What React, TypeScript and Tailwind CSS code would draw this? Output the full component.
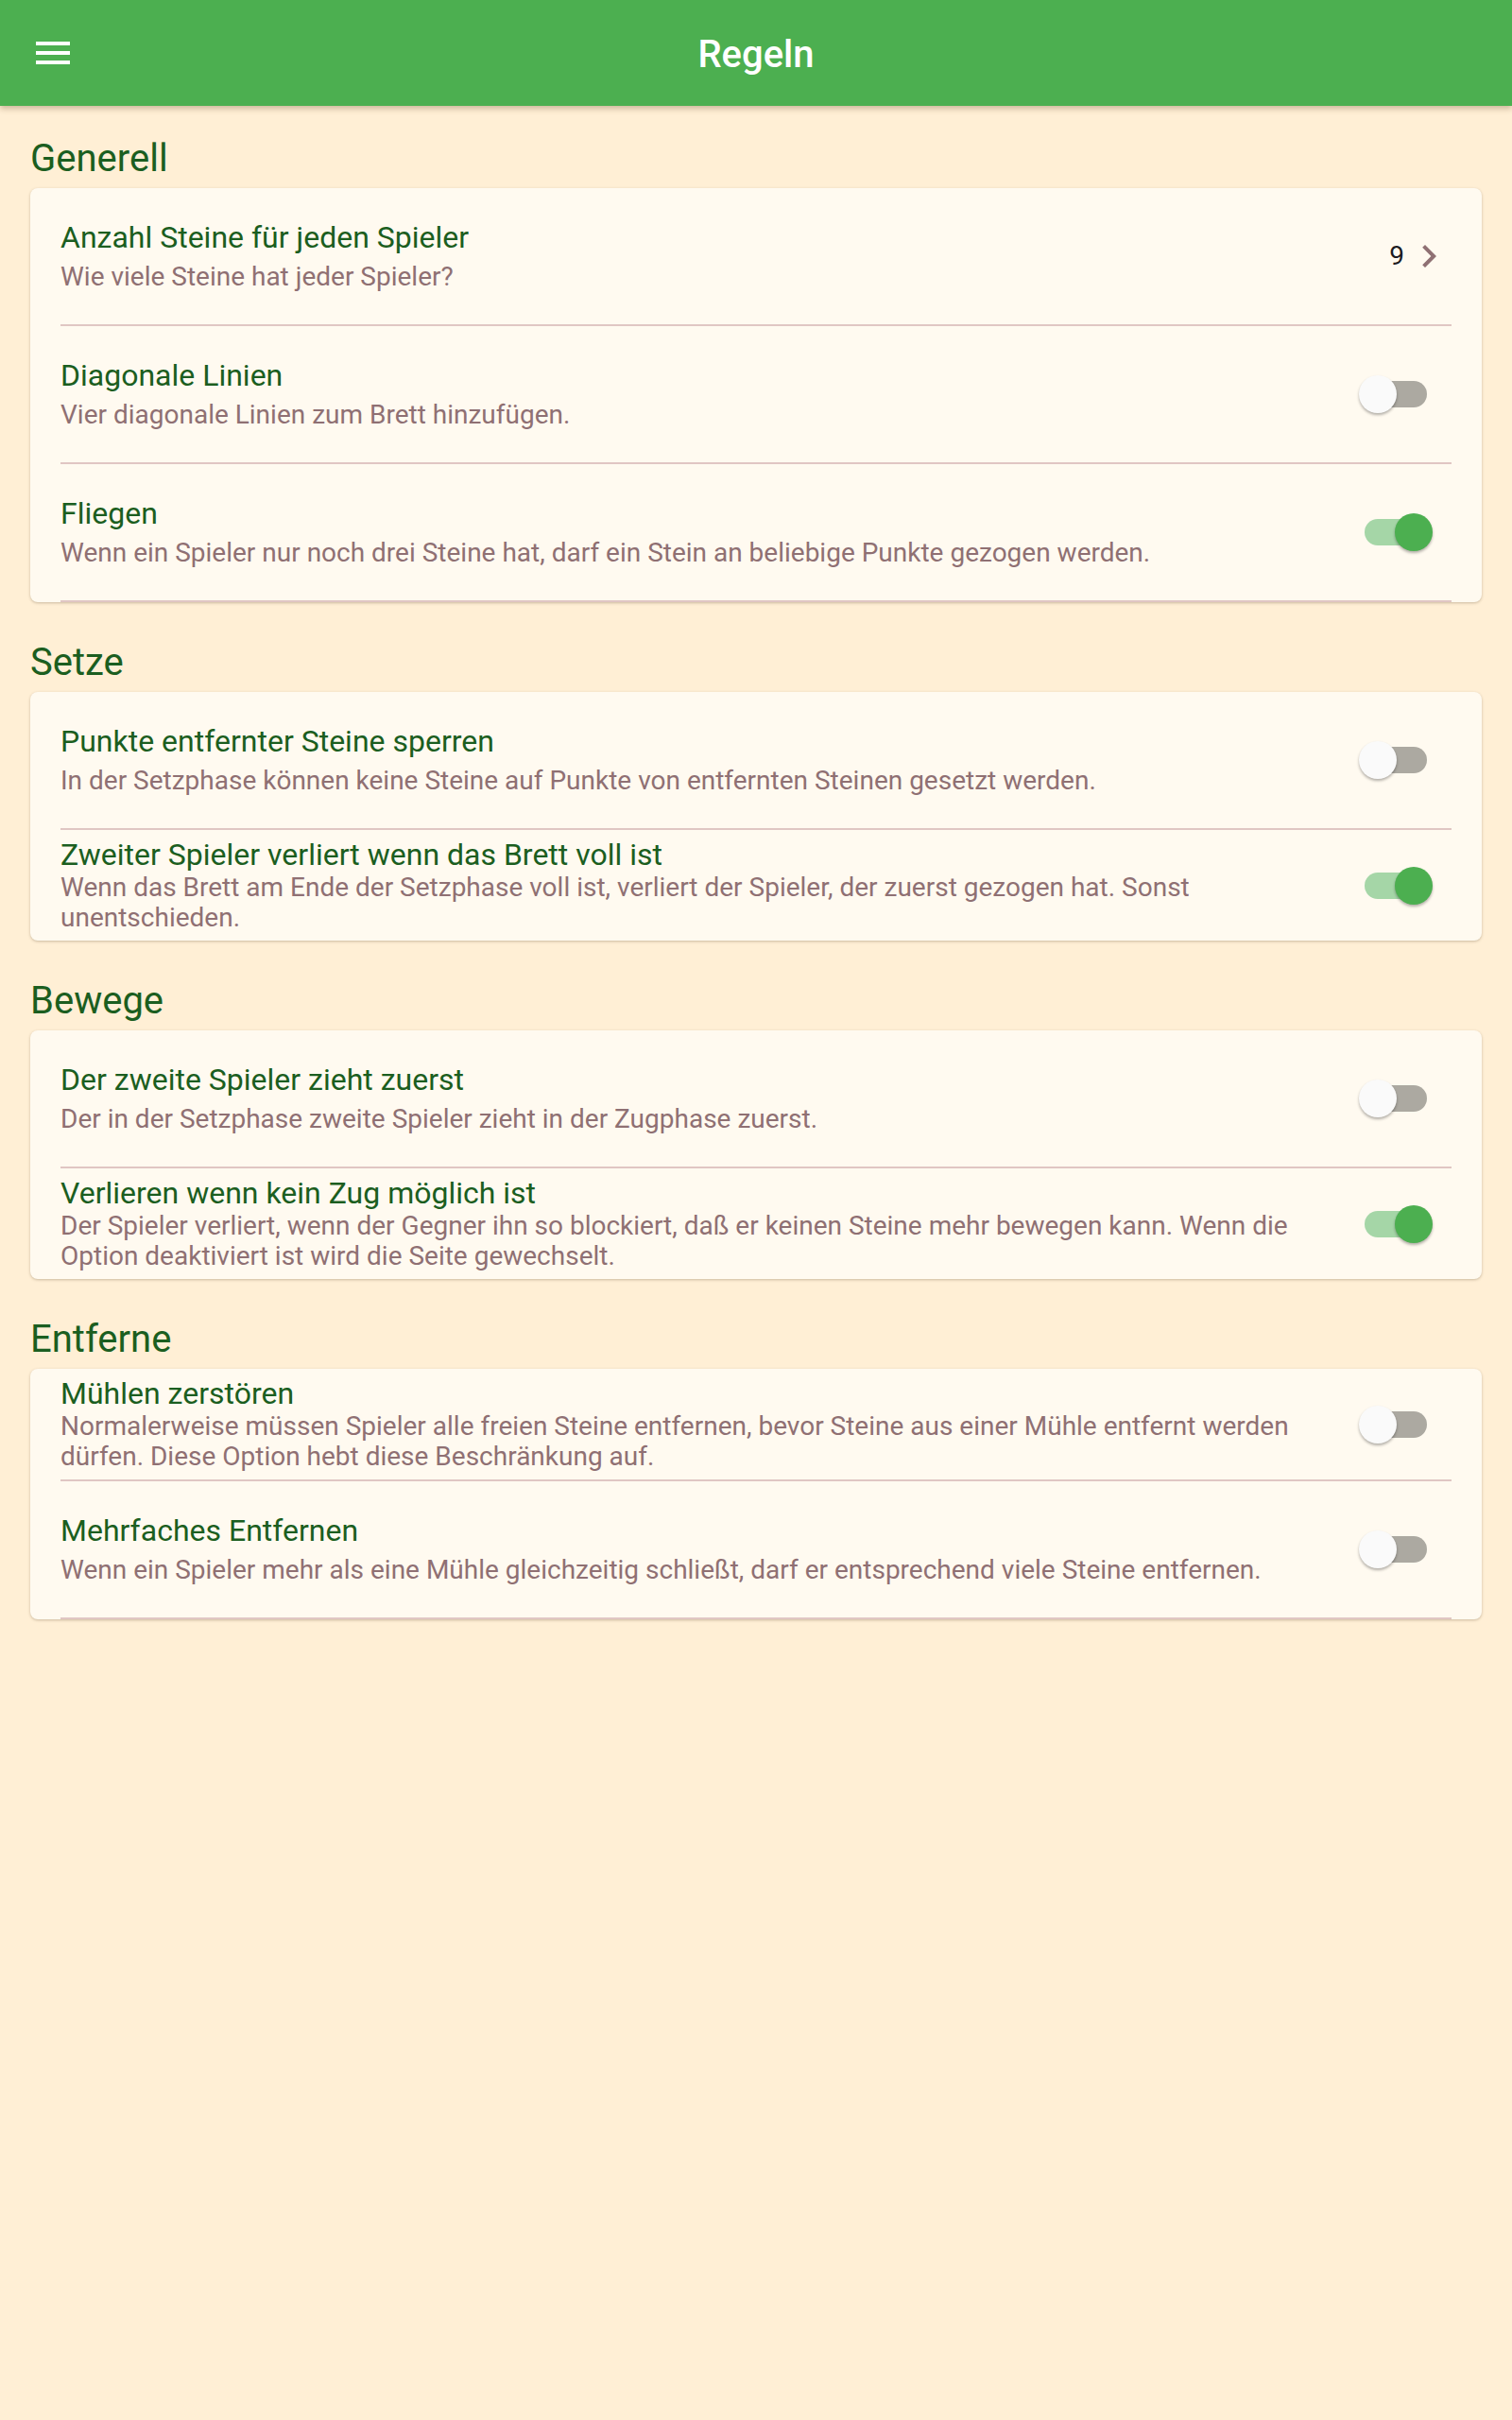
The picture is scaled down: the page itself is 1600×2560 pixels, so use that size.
type Rule = {
  title: string;
  subtitle: string;
  on?: boolean;
  value?: string;
  wrapped?: boolean;
  divider?: boolean;
};

const sections: { name: string; rules: Rule[] }[] = [
  {
    name: 'Generell',
    rules: [
      { title: 'Anzahl Steine für jeden Spieler', subtitle: 'Wie viele Steine hat jeder Spieler?', value: '9', divider: true },
      { title: 'Diagonale Linien', subtitle: 'Vier diagonale Linien zum Brett hinzufügen.', on: false, divider: true },
      { title: 'Fliegen', subtitle: 'Wenn ein Spieler nur noch drei Steine hat, darf ein Stein an beliebige Punkte gezogen werden.', on: true, divider: true },
    ],
  },
  {
    name: 'Setze',
    rules: [
      { title: 'Punkte entfernter Steine sperren', subtitle: 'In der Setzphase können keine Steine auf Punkte von entfernten Steinen gesetzt werden.', on: false, divider: true },
      { title: 'Zweiter Spieler verliert wenn das Brett voll ist', subtitle: 'Wenn das Brett am Ende der Setzphase voll ist, verliert der Spieler, der zuerst gezogen hat. Sonst unentschieden.', on: true, wrapped: true },
    ],
  },
  {
    name: 'Bewege',
    rules: [
      { title: 'Der zweite Spieler zieht zuerst', subtitle: 'Der in der Setzphase zweite Spieler zieht in der Zugphase zuerst.', on: false, divider: true },
      { title: 'Verlieren wenn kein Zug möglich ist', subtitle: 'Der Spieler verliert, wenn der Gegner ihn so blockiert, daß er keinen Steine mehr bewegen kann. Wenn die Option deaktiviert ist wird die Seite gewechselt.', on: true, wrapped: true },
    ],
  },
  {
    name: 'Entferne',
    rules: [
      { title: 'Mühlen zerstören', subtitle: 'Normalerweise müssen Spieler alle freien Steine entfernen, bevor Steine aus einer Mühle entfernt werden dürfen. Diese Option hebt diese Beschränkung auf.', on: false, wrapped: true, divider: true },
      { title: 'Mehrfaches Entfernen', subtitle: 'Wenn ein Spieler mehr als eine Mühle gleichzeitig schließt, darf er entsprechend viele Steine entfernen.', on: false, divider: true },
    ],
  },
];

function Toggle({ on }: { on: boolean }) {
  return (
    <div className="relative w-[118px] h-[48px] shrink-0">
      <div className={`absolute left-[26px] top-[10px] w-[66px] h-[28px] rounded-full ${on ? 'bg-[#a5d6a7]' : 'bg-[#aca9a1]'}`} />
      <div
        className={`absolute top-[4px] w-[40px] h-[40px] rounded-full shadow-[0_2px_3px_rgba(0,0,0,0.3)] ${on ? 'left-[58px] bg-[#4caf50]' : 'left-[20px] bg-[#fafafa]'}`}
      />
    </div>
  );
}

function RuleRow({ rule }: { rule: Rule }) {
  return (
    <>
      <div className={`flex items-center px-8 ${rule.wrapped ? 'h-[117px]' : 'h-[144px]'}`}>
        <div className={`flex-1 min-w-0 ${rule.wrapped ? '' : 'pb-[4px]'}`}>
          <div className={`text-[32px] text-[#1b5e20] ${rule.wrapped ? 'leading-[37px]' : 'leading-[48px]'}`}>{rule.title}</div>
          <div className={`text-[28px] text-[#8f7073] ${rule.wrapped ? 'leading-[32px]' : 'leading-[36px]'}`}>{rule.subtitle}</div>
        </div>
        {rule.value ? (
          <div className="ml-8 flex items-center">
            <span className="text-[28px] text-[#1c1b1f] mr-[2px]">{rule.value}</span>
            <svg viewBox="0 0 24 24" className="w-[48px] h-[48px] fill-[#8f7073]">
              <path d="M10 6 8.59 7.41 13.17 12l-4.58 4.59L10 18l6-6z" />
            </svg>
          </div>
        ) : (
          <div className="ml-8">
            <Toggle on={!!rule.on} />
          </div>
        )}
      </div>
      {rule.divider && <div className="mx-8 h-[2px] bg-[#e0c6c3]" />}
    </>
  );
}

export default function App() {
  return (
    <div className="min-h-screen bg-[#ffefd5] font-['Roboto','Liberation_Sans',sans-serif]">
      {/* App bar */}
      <header className="relative h-[112px] bg-[#4caf50] flex items-center justify-center shadow-[0_3px_6px_rgba(90,60,20,0.3)]">
        <svg viewBox="0 0 24 24" className="absolute left-8 top-8 w-[48px] h-[48px] fill-white">
          <path d="M3 18h18v-2H3v2zm0-5h18v-2H3v2zm0-7v2h18V6H3z" />
        </svg>
        <h1 className="pt-[3px] text-[40px] font-medium text-white">Regeln</h1>
      </header>

      <main className="pb-8">
        {sections.map((s) => (
          <section key={s.name}>
            <h2 className="pt-8 px-8 text-[40px] leading-[47px] text-[#1b5e20]">{s.name}</h2>
            <div className="mx-8 mt-2 mb-2 bg-[#fffaf0] rounded-[8px] shadow-[0_1px_3px_rgba(80,60,30,0.3)] overflow-hidden">
              {s.rules.map((r) => (
                <RuleRow key={r.title} rule={r} />
              ))}
            </div>
          </section>
        ))}
      </main>
    </div>
  );
}
